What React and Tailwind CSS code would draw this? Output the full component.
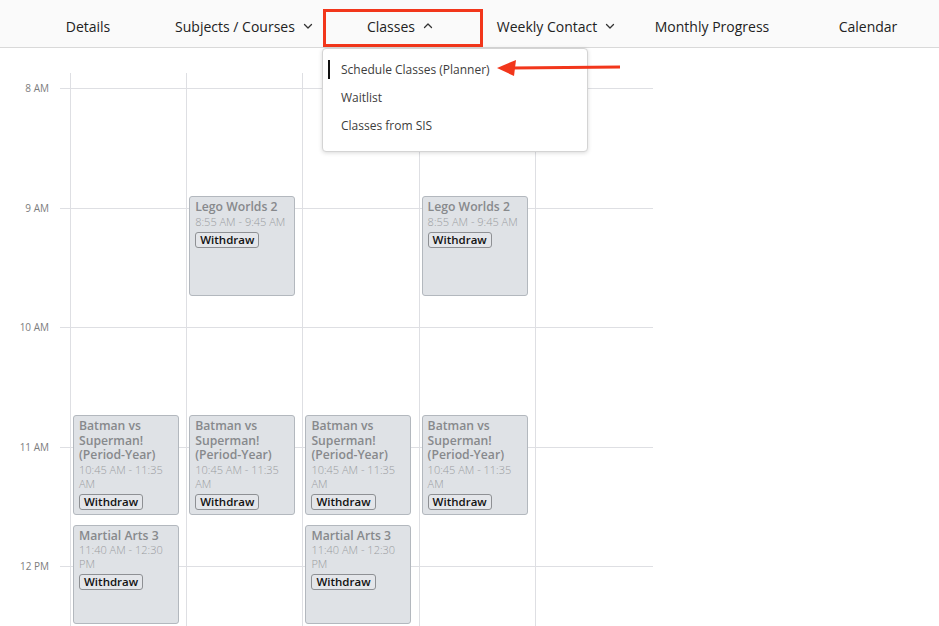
import React from 'react';

const HOUR = 119.5;
const FIRST_LINE = 15; // offset of 8 AM line from grid top

const navItems = [
  { label: 'Details' },
  { label: 'Subjects / Courses', chevron: 'down' },
  { label: 'Classes', chevron: 'up' },
  { label: 'Weekly Contact', chevron: 'down' },
  { label: 'Monthly Progress' },
  { label: 'Calendar' },
];

const hours = ['8 AM', '9 AM', '10 AM', '11 AM', '12 PM'];

const lego = { title: 'Lego Worlds 2', time: '8:55 AM - 9:45 AM', start: 8 + 55 / 60, end: 9.75 };
const batman = { title: 'Batman vs Superman! (Period-Year)', time: '10:45 AM - 11:35 AM', start: 10.75, end: 11 + 35 / 60 };
const martial = { title: 'Martial Arts 3', time: '11:40 AM - 12:30 PM', start: 11 + 40 / 60, end: 12.5 };

const columns = [
  [batman, martial],
  [lego, batman],
  [batman, martial],
  [lego, batman],
  [],
];

function Chevron({ dir }) {
  return (
    <svg width="10" height="10" viewBox="0 0 10 10" className="ml-[8px]">
      <path
        d={dir === 'up' ? 'M1.5 6.5 L5 3 L8.5 6.5' : 'M1.5 3.5 L5 7 L8.5 3.5'}
        fill="none"
        stroke="#333"
        strokeWidth="1.3"
        strokeLinecap="round"
        strokeLinejoin="round"
      />
    </svg>
  );
}

function EventCard({ ev }) {
  const top = FIRST_LINE + (ev.start - 8) * HOUR - 1.5;
  const height = (ev.end - ev.start) * HOUR;
  return (
    <div
      className="absolute left-[2px] w-[106px] bg-[#dfe2e6] border border-[#b3b8be] rounded-[3px] pl-[5px] pr-[2px] pt-[3px] overflow-hidden"
      style={{ top, height }}
    >
      <div className="text-[12.2px] leading-[14.5px] font-semibold text-[#87898c]">{ev.title}</div>
      <div className="text-[11px] leading-[14px] font-light text-[#9a9c9f]">{ev.time}</div>
      <button className="block w-fit mt-[3px] border border-[#8e9094] rounded-[3px] px-[4px] text-[11.5px] leading-[14px] font-semibold text-[#111] bg-[#e4e6ea]">
        Withdraw
      </button>
    </div>
  );
}

export default function App() {
  return (
    <div className="relative h-[626px] w-[939px] overflow-hidden bg-white font-['Open_Sans',sans-serif]">
      {/* top tabs */}
      <nav className="h-[48px] bg-[#fafafa] border-b border-[#d9d9d9] flex pl-[10px] overflow-hidden">
        {navItems.map((item) => (
          <div key={item.label} className="w-[156px] shrink-0 flex items-center justify-center text-[14px] text-[#222] pt-[5px]">
            {item.label}
            {item.chevron && <Chevron dir={item.chevron} />}
          </div>
        ))}
      </nav>

      {/* calendar */}
      <div className="relative mt-[25px] h-[553px] w-[653px]">
        <div className="flex flex-col pt-[15px]">
          {hours.map((h) => (
            <div key={h} className="flex h-[119.5px] shrink-0">
              <div className="w-[60px] pr-[11px] text-right text-[10px] leading-[10px] text-[#7d7d7d] -mt-[5px]">{h}</div>
              <div className="flex-1 border-t border-[#dedfe3]" />
            </div>
          ))}
        </div>
        <div className="absolute top-0 bottom-0 left-[70px] w-[581px] flex">
          {columns.map((evs, i) => (
            <div key={i} className="relative flex-1 border-l border-[#dedfe3]">
              {evs.map((ev, j) => (
                <EventCard key={j} ev={ev} />
              ))}
            </div>
          ))}
        </div>
      </div>

      {/* annotation box around Classes tab */}
      <div className="absolute left-[323px] top-[9px] w-[160px] h-[38px] border-[3px] border-[#f2361b]" />

      {/* dropdown */}
      <div className="absolute left-[322px] top-[48px] w-[266px] h-[104px] bg-white border border-[#d4d4d4] rounded-[4px] shadow-[0_1px_4px_rgba(0,0,0,0.15)] pt-[7px]">
        {['Schedule Classes (Planner)', 'Waitlist', 'Classes from SIS'].map((t, i) => (
          <div key={t} className="relative h-[28px] flex items-center pl-[18px] text-[12px] text-[#3d3d3d]">
            {i === 0 && <span className="absolute left-[5px] top-[4px] w-[2px] h-[19px] bg-[#111]" />}
            {t}
          </div>
        ))}
      </div>

      {/* annotation arrow */}
      <svg className="absolute left-[494px] top-[58px]" width="130" height="22" viewBox="0 0 130 22">
        <line x1="18" y1="10" x2="126" y2="9" stroke="#f2361b" strokeWidth="3" />
        <polygon points="3,10 22,2 20,18" fill="#f2361b" />
      </svg>
    </div>
  );
}
